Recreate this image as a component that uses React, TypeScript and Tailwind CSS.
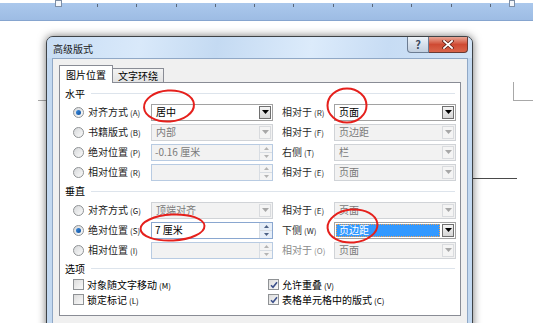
import React from 'react';

type Row = {
  checked?: boolean;
  label: string;
  key1: string;
  kind: 'combo' | 'spin';
  value: string;
  enabled?: boolean;
  right: string;
  key2: string;
  rightValue: string;
  rightEnabled?: boolean;
  rightSelected?: boolean;
  rightLabelGray?: boolean;
};

const horizontalRows: Row[] = [
  { checked: true, label: '对齐方式', key1: 'A', kind: 'combo', value: '居中', enabled: true, right: '相对于', key2: 'R', rightValue: '页面', rightEnabled: true },
  { label: '书籍版式', key1: 'B', kind: 'combo', value: '内部', right: '相对于', key2: 'F', rightValue: '页边距' },
  { label: '绝对位置', key1: 'P', kind: 'spin', value: '-0.16 厘米', right: '右侧', key2: 'T', rightValue: '栏' },
  { label: '相对位置', key1: 'R', kind: 'spin', value: '', right: '相对于', key2: 'E', rightValue: '页面' },
];

const verticalRows: Row[] = [
  { label: '对齐方式', key1: 'G', kind: 'combo', value: '顶端对齐', right: '相对于', key2: 'E', rightValue: '页面' },
  { checked: true, label: '绝对位置', key1: 'S', kind: 'spin', value: '7 厘米', enabled: true, right: '下侧', key2: 'W', rightValue: '页边距', rightEnabled: true, rightSelected: true },
  { label: '相对位置', key1: 'I', kind: 'spin', value: '', right: '相对于', key2: 'O', rightValue: '页面', rightLabelGray: true },
];

const Hot = ({ k }: { k: string }) => (
  <span className="ml-[2px] text-[8px] leading-none">({k})</span>
);

const Arrow = ({ color }: { color: string }) => (
  <svg width="7" height="4" viewBox="0 0 7 4">
    <path d="M0 0h7L3.5 4z" fill={color} />
  </svg>
);

const Radio = ({ checked }: { checked?: boolean }) => (
  <span className="flex h-[11px] w-[11px] shrink-0 items-center justify-center rounded-full border border-[#8f9295] bg-gradient-to-br from-[#d6d8da] to-[#fbfbfb]">
    {checked && <span className="h-[5px] w-[5px] rounded-full bg-gradient-to-br from-[#3e8ee0] to-[#0b4f9e]" />}
  </span>
);

const Check = ({ checked }: { checked?: boolean }) => (
  <span className="flex h-[11px] w-[11px] shrink-0 items-center justify-center border border-[#8f9295] bg-gradient-to-br from-[#dcdcdc] to-[#fafafa]">
    {checked && (
      <svg width="8" height="8" viewBox="0 0 8 8">
        <path d="M1 4.2l2 2L7 1.2" fill="none" stroke="#3b4f8a" strokeWidth="1.6" />
      </svg>
    )}
  </span>
);

const Combo = ({ value, enabled, selected }: { value: string; enabled?: boolean; selected?: boolean }) => (
  <div
    className={`flex h-[17px] w-[122px] shrink-0 border ${
      enabled ? 'border-[#a2a2a2] bg-white text-black' : 'border-[#d0d3d7] bg-[#f2f2f2] text-[#7a7a7a]'
    }`}
  >
    <div className="flex flex-1 items-center p-[1px]">
      {selected ? (
        <span className="flex h-full flex-1 items-center border border-dotted border-[#f0a050] bg-[#3399ff] pl-[2px] text-white">
          {value}
        </span>
      ) : (
        <span className="pl-[3px]">{value}</span>
      )}
    </div>
    <div
      className={`m-[1px] flex w-[12px] items-center justify-center border ${
        enabled
          ? 'border-[#707070] bg-gradient-to-b from-[#f4f4f4] to-[#d6d6d6]'
          : 'border-[#d9dbde] bg-[#f4f4f4]'
      }`}
    >
      <Arrow color={enabled ? '#000' : '#a8a8a8'} />
    </div>
  </div>
);

const Spin = ({ value, enabled }: { value: string; enabled?: boolean }) => (
  <div
    className={`flex h-[17px] w-[122px] shrink-0 border ${
      enabled ? 'border-[#8aa7d0] bg-white text-black' : 'border-[#b8cbe2] bg-[#f2f2f2] text-[#7a7a7a]'
    }`}
  >
    <div className="flex flex-1 items-center pl-[3px]">{value}</div>
    <div className="flex w-[13px] flex-col border-l border-[#d8dde3]">
      <div className={`flex flex-1 items-center justify-center ${enabled ? 'bg-[#e6eef8]' : 'bg-[#f4f4f4]'}`}>
        <svg width="5" height="3" viewBox="0 0 5 3">
          <path d="M0 3h5L2.5 0z" fill={enabled ? '#4d6185' : '#b4b4b4'} />
        </svg>
      </div>
      <div className={`flex flex-1 items-center justify-center border-t border-[#d8dde3] ${enabled ? 'bg-[#e6eef8]' : 'bg-[#f4f4f4]'}`}>
        <svg width="5" height="3" viewBox="0 0 5 3">
          <path d="M0 0h5L2.5 3z" fill={enabled ? '#4d6185' : '#b4b4b4'} />
        </svg>
      </div>
    </div>
  </div>
);

// section title with the thin rule after it
const Header = ({ title, h }: { title: string; h: string }) => (
  <div className={`flex items-center pl-[5px] pr-[5px] ${h}`}>
    <span>{title}</span>
    <div className="ml-[6px] h-px flex-1 bg-[#dde4ec]" />
  </div>
);

const FieldRow = ({ row }: { row: Row }) => (
  <div className="flex h-[20px] items-center pl-[13px]">
    <Radio checked={row.checked} />
    <span className="ml-[4px] w-[63px] shrink-0 whitespace-nowrap text-[#1a1a1a]">
      {row.label}
      <Hot k={row.key1} />
    </span>
    {row.kind === 'combo' ? <Combo value={row.value} enabled={row.enabled} /> : <Spin value={row.value} enabled={row.enabled} />}
    <span className={`ml-[9px] w-[52px] shrink-0 whitespace-nowrap ${row.rightLabelGray ? 'text-[#8a8a8a]' : 'text-[#2a2a2a]'}`}>
      {row.right}
      <Hot k={row.key2} />
    </span>
    <Combo value={row.rightValue} enabled={row.rightEnabled} selected={row.rightSelected} />
  </div>
);

const OptionRow = ({ left, k1, right, k2 }: { left: string; k1: string; right: string; k2: string }) => (
  <div className="flex h-[15px] items-center pl-[13px]">
    <Check />
    <span className="ml-[3px] w-[181px] whitespace-nowrap">
      {left}
      <Hot k={k1} />
    </span>
    <Check checked />
    <span className="ml-[3px] whitespace-nowrap">
      {right}
      <Hot k={k2} />
    </span>
  </div>
);

export default function App() {
  return (
    <div className="relative h-[323px] w-[533px] overflow-hidden bg-white font-['Noto_Sans_CJK_SC','Liberation_Sans',sans-serif] text-[10px] leading-none text-black">
      {/* ruler */}
      <div className="h-[3px] bg-white" />
      <div className="relative h-[18px] border-b border-[#86a5cf] bg-gradient-to-b from-[#abc8ec] to-[#9dbce4]">
        <div className="flex gap-[38.3px] pl-[97px] pt-[1px]">
          {Array.from({ length: 11 }).map((_, i) => (
            <div key={i} className="h-[3px] w-px bg-[#59677a]" />
          ))}
        </div>
      </div>
      <div className="absolute left-[55px] top-0 h-[7px] w-[7px] border border-[#7d8ea6] bg-[#f4f7fb]" />
      <div className="absolute left-[509px] top-0 h-[7px] w-[6px] border border-[#7d8ea6] bg-[#f4f7fb]" />

      {/* page marks */}
      <div className="absolute left-[38px] top-[100px] h-px w-[10px] bg-[#a8a8a8]" />
      <div className="absolute left-[513px] top-[82px] h-[19px] w-px bg-[#a8a8a8]" />
      <div className="absolute left-[513px] top-[100px] h-px w-[20px] bg-[#a8a8a8]" />
      <div className="absolute left-[473px] top-[178px] h-px w-[44px] bg-[#4a4a4a]" />

      {/* dialog */}
      <div className="absolute left-[46px] top-[36px] flex h-[300px] w-[427px] flex-col rounded-t-[7px] border border-[#3f4347] bg-[#c3d9f1] shadow-[0_0_9px_rgba(0,0,0,0.55)]">
        <div className="flex h-[21px] rounded-t-[6px] bg-[linear-gradient(100deg,#c8ddf4_0%,#d9e9fa_22%,#c4daf2_40%,#dcebfb_62%,#c7dcf4_80%,#d2e4f7_100%)] pl-[6px] pr-[4px]">
          <span className="flex-1 pt-[7px] text-[10px] text-[#1b1b1b]">高级版式</span>
          <div className="flex h-[16px]">
            <div className="flex w-[22px] items-center justify-center rounded-bl-[4px] border border-t-0 border-[#6c7c92] bg-gradient-to-b from-[#eef3f9] via-[#d6e0ec] to-[#c2cfdf] text-[11px] font-bold text-[#3c4a5e]">
              ?
            </div>
            <div className="flex w-[39px] items-center justify-center rounded-br-[4px] border border-l-0 border-t-0 border-[#6a3a33] bg-gradient-to-b from-[#e8a696] via-[#cf4a33] to-[#d9644a]">
              <svg width="12" height="9" viewBox="0 0 12 9">
                <path d="M2 1l8 7M10 1L2 8" stroke="#5a1c14" strokeWidth="3.2" strokeLinecap="square" />
                <path d="M2 1l8 7M10 1L2 8" stroke="#fff" strokeWidth="1.8" strokeLinecap="square" />
              </svg>
            </div>
          </div>
        </div>

        <div className="ml-[5px] mr-[4px] flex flex-1 flex-col border border-[#90a8c6] bg-[#f0f0f0] pl-[6px] pr-[6px] pt-[6px]">
          {/* tabs */}
          <div className="relative z-10 flex h-[18px] items-end">
            <div className="flex h-[18px] w-[54px] items-center justify-center border border-b-0 border-[#898c95] bg-white pt-[1px]">
              图片位置
            </div>
            <div className="mb-px flex h-[14px] w-[51px] items-center justify-center border border-b-0 border-l-0 border-[#898c95] bg-gradient-to-b from-[#f3f3f3] to-[#e3e3e3]">
              文字环绕
            </div>
          </div>
          <div className="-mt-px flex h-[234px] flex-col border border-[#898c95] bg-white pt-[2px]">
            <Header title="水平" h="h-[17px]" />
            {horizontalRows.map((r, i) => (
              <FieldRow key={`h${i}`} row={r} />
            ))}
            <Header title="垂直" h="h-[18px]" />
            {verticalRows.map((r, i) => (
              <FieldRow key={`v${i}`} row={r} />
            ))}
            <Header title="选项" h="h-[17px]" />
            <OptionRow left="对象随文字移动" k1="M" right="允许重叠" k2="V" />
            <OptionRow left="锁定标记" k1="L" right="表格单元格中的版式" k2="C" />
          </div>
        </div>
      </div>

      {/* red annotation ellipses */}
      <svg className="pointer-events-none absolute left-0 top-0" width="533" height="323">
        <g fill="none" stroke="#e5201c" strokeWidth="2">
          <ellipse cx="169" cy="106" rx="25" ry="15.5" transform="rotate(-4 169 106)" />
          <ellipse cx="347" cy="105.5" rx="19.5" ry="17" />
          <ellipse cx="172.5" cy="227.5" rx="32" ry="13" transform="rotate(-3 172.5 227.5)" />
          <ellipse cx="352.5" cy="226" rx="25" ry="16.5" transform="rotate(-5 352.5 226)" />
        </g>
      </svg>
    </div>
  );
}
